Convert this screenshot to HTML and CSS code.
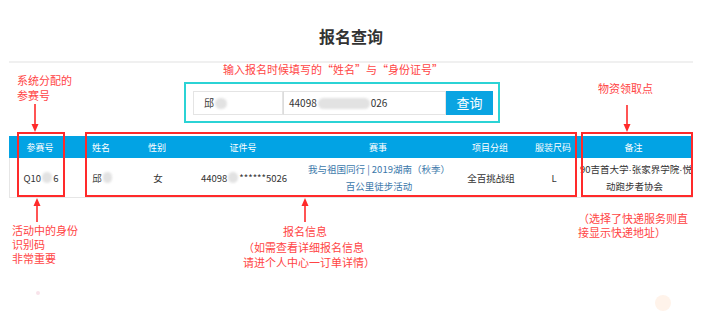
FILE: index.html
```html
<!DOCTYPE html>
<html lang="zh-CN">
<head>
<meta charset="utf-8">
<title>报名查询</title>
<link rel="stylesheet" href="styles.css">
</head>
<body>
<div class="page">
  <h1 class="title">报名查询</h1>
  <div class="divider"></div>

  <div class="search">
    <div class="field name">邱<span class="blob b-name"></span></div>
    <div class="field idno">44098<span class="blob b-id"></span>026</div>
    <div class="btn">查询</div>
  </div>

  <div class="table">
    <div class="row head">
      <div class="cell">参赛号</div>
      <div class="cell">姓名</div>
      <div class="cell">性别</div>
      <div class="cell">证件号</div>
      <div class="cell">赛事</div>
      <div class="cell">项目分组</div>
      <div class="cell">服装尺码</div>
      <div class="cell remark">备注</div>
    </div>
    <div class="row body">
      <div class="cell">Q10<span class="blob b-q"></span>6</div>
      <div class="cell">邱<span class="blob b-n"></span></div>
      <div class="cell">女</div>
      <div class="cell">44098<span class="blob b-i"></span>******5026</div>
      <div class="cell event">我与祖国同行 | 2019湖南（秋季）<br>百公里徒步活动</div>
      <div class="cell">全百挑战组</div>
      <div class="cell">L</div>
      <div class="cell remark multi">90吉首大学<span class="sep">·</span>张家界学院<span class="sep">·</span>悦<br>动跑步者协会</div>
    </div>
  </div>
</div>

<div class="notes">
  <div class="note n-top">输入报名时候填写的“姓名”与“身份证号”</div>
  <div class="hl cyan"></div>

  <div class="note n-l1">系统分配的<br>参赛号</div>
  <svg class="arrow a1" width="10" height="28" viewBox="0 0 10 28"><line x1="5" y1="0" x2="5" y2="21" /><polygon points="1.5,20 8.5,20 5,28" /></svg>

  <div class="note n-r1">物资领取点</div>
  <svg class="arrow a4" width="10" height="27" viewBox="0 0 10 27"><line x1="5" y1="0" x2="5" y2="20" /><polygon points="1.5,19 8.5,19 5,27" /></svg>

  <div class="hl red r1"></div>
  <div class="hl red r2"></div>
  <div class="hl red r3"></div>

  <svg class="arrow a2" width="10" height="24" viewBox="0 0 10 24"><polygon points="1.5,8 8.5,8 5,0" /><line x1="5" y1="7" x2="5" y2="24" /></svg>
  <svg class="arrow a3" width="10" height="24" viewBox="0 0 10 24"><polygon points="1.5,8 8.5,8 5,0" /><line x1="5" y1="7" x2="5" y2="24" /></svg>

  <div class="note n-l2">活动中的身份<br>识别码<br>非常重要</div>
  <div class="note n-m1">报名信息</div>
  <div class="note n-m2">（如需查看详细报名信息<br>请进个人中心一订单详情）</div>
  <div class="note n-r2">（选择了快递服务则直<br>接显示快递地址）</div>

  <div class="dot d1"></div>
  <div class="dot d2"></div>
</div>
</body>
</html>
```

FILE: styles.css
```css
* { box-sizing: border-box; }

html, body {
  margin: 0;
  padding: 0;
}

body {
  width: 702px;
  height: 318px;
  position: relative;
  overflow: hidden;
  background: #ffffff;
  font-family: "Noto Sans CJK SC", "Noto Sans", sans-serif;
  color: #333333;
}

.page {
  padding-top: 26px;
}

.title {
  margin: 0;
  font-size: 16px;
  line-height: 20px;
  font-weight: 700;
  text-align: center;
  color: #333333;
}

.divider {
  margin: 15px 9px 0 9px;
  height: 2px;
  background: #f0f0f0;
}

.search {
  display: flex;
  margin: 28px 0 0 193px;
  height: 24px;
}

.field {
  height: 24px;
  border: 1px solid #e4e4e4;
  background: #ffffff;
  font-size: 10px;
  line-height: 22px;
  color: #333333;
  display: flex;
  align-items: center;
  white-space: nowrap;
}

.field.name {
  width: 90px;
  padding-left: 10px;
}

.field.idno {
  width: 163px;
  border-left: 1px solid #dcdcdc;
  padding-left: 5px;
}

.btn {
  width: 47px;
  height: 24px;
  background: #0aa4e2;
  color: #ffffff;
  font-size: 13px;
  line-height: 24px;
  text-align: center;
}

.blob {
  display: inline-block;
  height: 11px;
  background: #e2e2e2;
  border-radius: 6px;
  filter: blur(1.2px);
  vertical-align: middle;
}

.b-name { width: 12px; margin-left: 1px; }
.b-id { width: 52px; margin: 0 1px; }
.b-q { width: 10px; margin: 0 1px; }
.b-n { width: 9px; margin-left: 1px; }
.b-i { width: 10px; margin: 0 1px; }

.table {
  margin: 21px 0 0 9px;
  width: 684px;
}

.row {
  display: grid;
  grid-template-columns: 62px 60px 52px 120px 150px 74px 52px 114px;
}

.row.head {
  height: 22px;
  background: #02a3e4;
  color: #ffffff;
  font-size: 9px;
}

.row.body {
  height: 40px;
  border: 1px solid #e6e6e6;
  border-top: none;
  font-size: 9.5px;
  color: #333333;
}

.cell {
  display: flex;
  align-items: center;
  justify-content: center;
  text-align: center;
  white-space: nowrap;
}

.cell.remark {
  padding-right: 5px;
}

.cell.event {
  color: #3b78aa;
  line-height: 17px;
  font-size: 9.5px;
}

.cell.multi {
  display: block;
  padding-top: 3px;
  line-height: 17px;
}

.sep {
  font-family: "Liberation Sans", sans-serif;
}

/* annotations overlay */
.notes {
  position: absolute;
  left: 0;
  top: 0;
  width: 702px;
  height: 318px;
  pointer-events: none;
}

.note {
  position: absolute;
  font-size: 11px;
  color: #ff4444;
  white-space: nowrap;
}

.n-top { left: 223px; top: 62px; line-height: 14px; }
.n-l1 { left: 17px; top: 73px; line-height: 15px; }
.n-r1 { left: 598px; top: 81px; line-height: 14px; }
.n-l2 { left: 12px; top: 223px; line-height: 14px; }
.n-m1 { left: 245px; width: 120px; text-align: center; top: 224px; line-height: 14px; }
.n-m2 { left: 243px; top: 240px; line-height: 15px; }
.n-r2 { left: 578px; top: 211px; line-height: 14px; }

.hl {
  position: absolute;
}

.hl.cyan {
  left: 184px;
  top: 82px;
  width: 316px;
  height: 41px;
  border: 2px solid #2bd3d5;
}

.hl.red {
  top: 132px;
  height: 65px;
  border: 2px solid #ff2a2a;
}

.r1 { left: 17px; width: 48px; }
.r2 { left: 85px; width: 492px; }
.r3 { left: 581px; width: 112px; }

.arrow {
  position: absolute;
}

.arrow line {
  stroke: #ff2a2a;
  stroke-width: 1.6;
}

.arrow polygon {
  fill: #ff2a2a;
}

.a1 { left: 30px; top: 104px; }
.a4 { left: 622px; top: 105px; }
.a2 { left: 32px; top: 198px; }
.a3 { left: 300px; top: 198px; }

.dot {
  position: absolute;
  border-radius: 50%;
}

.d1 {
  left: 36px;
  top: 291px;
  width: 4px;
  height: 4px;
  background: #f8e3ea;
}

.d2 {
  left: 655px;
  top: 295px;
  width: 16px;
  height: 16px;
  background: #fff3ea;
}
```
